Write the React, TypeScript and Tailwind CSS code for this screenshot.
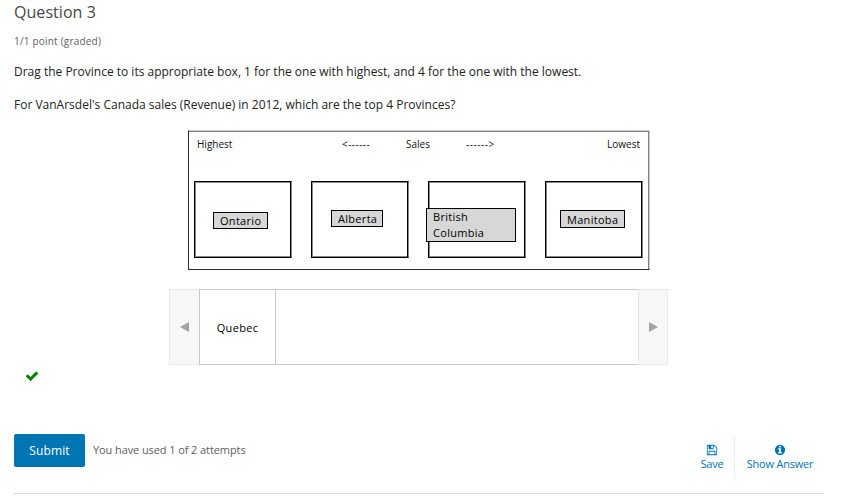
import React from "react";

function Icon({ d, className }: { d: string; className: string }) {
  return (
    <svg viewBox="0 0 1792 1792" fill="currentColor" aria-hidden="true" className={className}>
      <path d={d} />
    </svg>
  );
}

const CHECK =
  "M1671 566q0 40-28 68l-724 724-136 136q-28 28-68 28t-68-28l-136-136-362-362q-28-28-28-68t28-68l136-136q28-28 68-28t68 28l294 295 656-657q28-28 68-28t68 28l136 136q28 28 28 68z";
const FLOPPY =
  "M512 1536h768v-384h-768v384zm896 0h128v-896q0-14-10-38.5t-20-34.5l-281-281q-10-10-34-20t-39-10v416q0 40-28 68t-68 28h-576q-40 0-68-28t-28-68v-416h-128v1280h128v-416q0-40 28-68t68-28h832q40 0 68 28t28 68v416zm-384-928v-320q0-13-9.5-22.5t-22.5-9.5h-192q-13 0-22.5 9.5t-9.5 22.5v320q0 13 9.5 22.5t22.5 9.5h192q13 0 22.5-9.5t9.5-22.5zm640 32v928q0 40-28 68t-68 28h-1344q-40 0-68-28t-28-68v-1344q0-40 28-68t68-28h928q40 0 88 20t76 48l280 280q28 28 48 76t20 88z";
const INFO =
  "M1152 1376v-160q0-14-9-23t-23-9h-96v-512q0-14-9-23t-23-9h-320q-14 0-23 9t-9 23v160q0 14 9 23t23 9h96v320h-96q-14 0-23 9t-9 23v160q0 14 9 23t23 9h448q14 0 23-9t9-23zm-128-896v-160q0-14-9-23t-23-9h-192q-14 0-23 9t-9 23v160q0 14 9 23t23 9h192q14 0 23-9t9-23zm640 416q0 209-103 385.5t-279.5 279.5-385.5 103-385.5-103-279.5-279.5-103-385.5 103-385.5 279.5-279.5 385.5-103 385.5 103 279.5 279.5 103 385.5z";

// Each dropped label keeps the spot where it was released inside its box.
const boxes = [
  { label: "Ontario", place: "left-[18px] top-[30px] h-[17px] w-[55px] leading-[16px]" },
  { label: "Alberta", place: "left-[19px] top-[28px] h-[17px] w-[52px] leading-[16px]" },
  { label: "British Columbia", place: "-left-[3px] top-[26px] h-[34px] w-[90px] leading-[16px]" },
  { label: "Manitoba", place: "left-[14px] top-[28px] h-[18px] w-[65px] leading-[17px]" },
];

function Target() {
  return (
    <section className="mx-auto mt-[15px] flex h-[140px] w-[462px] flex-col border border-[#2b2b2b] border-r-[#cfcfcf] border-t-[#cfcfcf] pl-[5px] pr-[6px] shadow-[inset_0_1px_0_#808080,inset_-1px_0_0_#808080]">
      <div className="flex h-[26px] items-center pl-[3px] text-[10px] font-medium leading-[14px] text-[#111]">
        <span className="w-[145px]">Highest</span>
        <span className="w-[64px] tracking-[0.45px]">&lt;------</span>
        <span className="w-[60px]">Sales</span>
        <span className="tracking-[0.55px]">------&gt;</span>
        <span className="ml-auto pr-[3px]">Lowest</span>
      </div>
      <div className="mt-[24px] flex justify-between">
        {boxes.map(({ label, place }) => (
          <div
            key={label}
            className="relative h-[77px] w-[98px] border border-black border-r-[#888] shadow-[inset_-1px_0_0_#000,inset_1px_0_0_#888,inset_0_1px_0_#888,inset_0_-1px_0_#888]"
          >
            <div
              className={`absolute border border-black bg-[#d7d7d7] px-[6px] text-[11px] tracking-[0.3px] text-black ${place}`}
            >
              {label}
            </div>
          </div>
        ))}
      </div>
    </section>
  );
}

function Carousel() {
  return (
    <section className="ml-[155px] mt-[19px] flex h-[76px] w-[499px]">
      <button className="flex w-[30px] items-center justify-center border border-r-0 border-[#e8e8e8] bg-[#f7f7f7]">
        <svg viewBox="0 0 9 10" className="h-[10px] w-[9px] text-[#a3a3a3]">
          <path d="M9 0v10L0 5z" fill="currentColor" />
        </svg>
      </button>
      <div className="flex flex-1 border border-r-0 border-[#c8c8c8]">
        <div className="flex w-[76px] items-center justify-center border-r border-[#c8c8c8] pt-[2px] text-[11px] tracking-[0.33px] text-black">
          Quebec
        </div>
      </div>
      <button className="flex w-[30px] items-center justify-center border border-[#e8e8e8] bg-[#f7f7f7]">
        <svg viewBox="0 0 9 10" className="h-[10px] w-[9px] text-[#a3a3a3]">
          <path d="M0 0v10L9 5z" fill="currentColor" />
        </svg>
      </button>
    </section>
  );
}

export default function App() {
  return (
    <main className="h-[499px] w-[865px] overflow-hidden bg-white pl-[14px] font-['Open_Sans',sans-serif]">
      <div className="w-[810px]">
        <h3 className="pt-[2px] text-[16px] leading-[20px] tracking-[0.05px] text-[#474747]">Question 3</h3>
        <div className="mt-[12px] text-[10px] leading-[14px] tracking-[0.2px] text-[#5e5e5e]">1/1 point (graded)</div>
        <p className="mt-[14px] text-[12px] leading-[20px] text-[#222]">
          Drag the Province to its appropriate box, 1 for the one with highest, and 4 for the one with the lowest.
        </p>
        <p className="mt-[13px] text-[12px] leading-[20px] text-[#222]">
          For VanArsdel's Canada sales (Revenue) in 2012, which are the top 4 Provinces?
        </p>
        <Target />
        <Carousel />
        <Icon d={CHECK} className="ml-[11px] mt-[4px] h-[14px] w-[14px] text-[#008100]" />
        <div className="mt-[50px] flex h-[46px]">
          <button className="mt-[1px] h-[33px] w-[71px] rounded-[2px] bg-[#0075b4] text-[12px] leading-[33px] tracking-[0.1px] text-white">
            Submit
          </button>
          <span className="ml-[8px] pt-[8px] text-[11px] leading-[18px] tracking-[-0.09px] text-[#5e5e5e]">
            You have used 1 of 2 attempts
          </span>
          <div className="ml-auto mt-[3px] flex h-[43px] text-[11px] leading-[14px] tracking-[-0.2px] text-[#0075b4]">
            <button className="flex w-[46px] flex-col items-center border-r border-[#eee] pt-[8px]">
              <Icon d={FLOPPY} className="mb-px h-[12px] w-[12px]" />
              <span className="pl-px">Save</span>
            </button>
            <button className="flex w-[89px] flex-col items-center pt-[8px]">
              <Icon d={INFO} className="mb-px h-[12px] w-[12px]" />
              <span className="pl-px">Show Answer</span>
            </button>
          </div>
        </div>
        <hr className="mt-[14px] border-[#ddd]" />
      </div>
    </main>
  );
}
